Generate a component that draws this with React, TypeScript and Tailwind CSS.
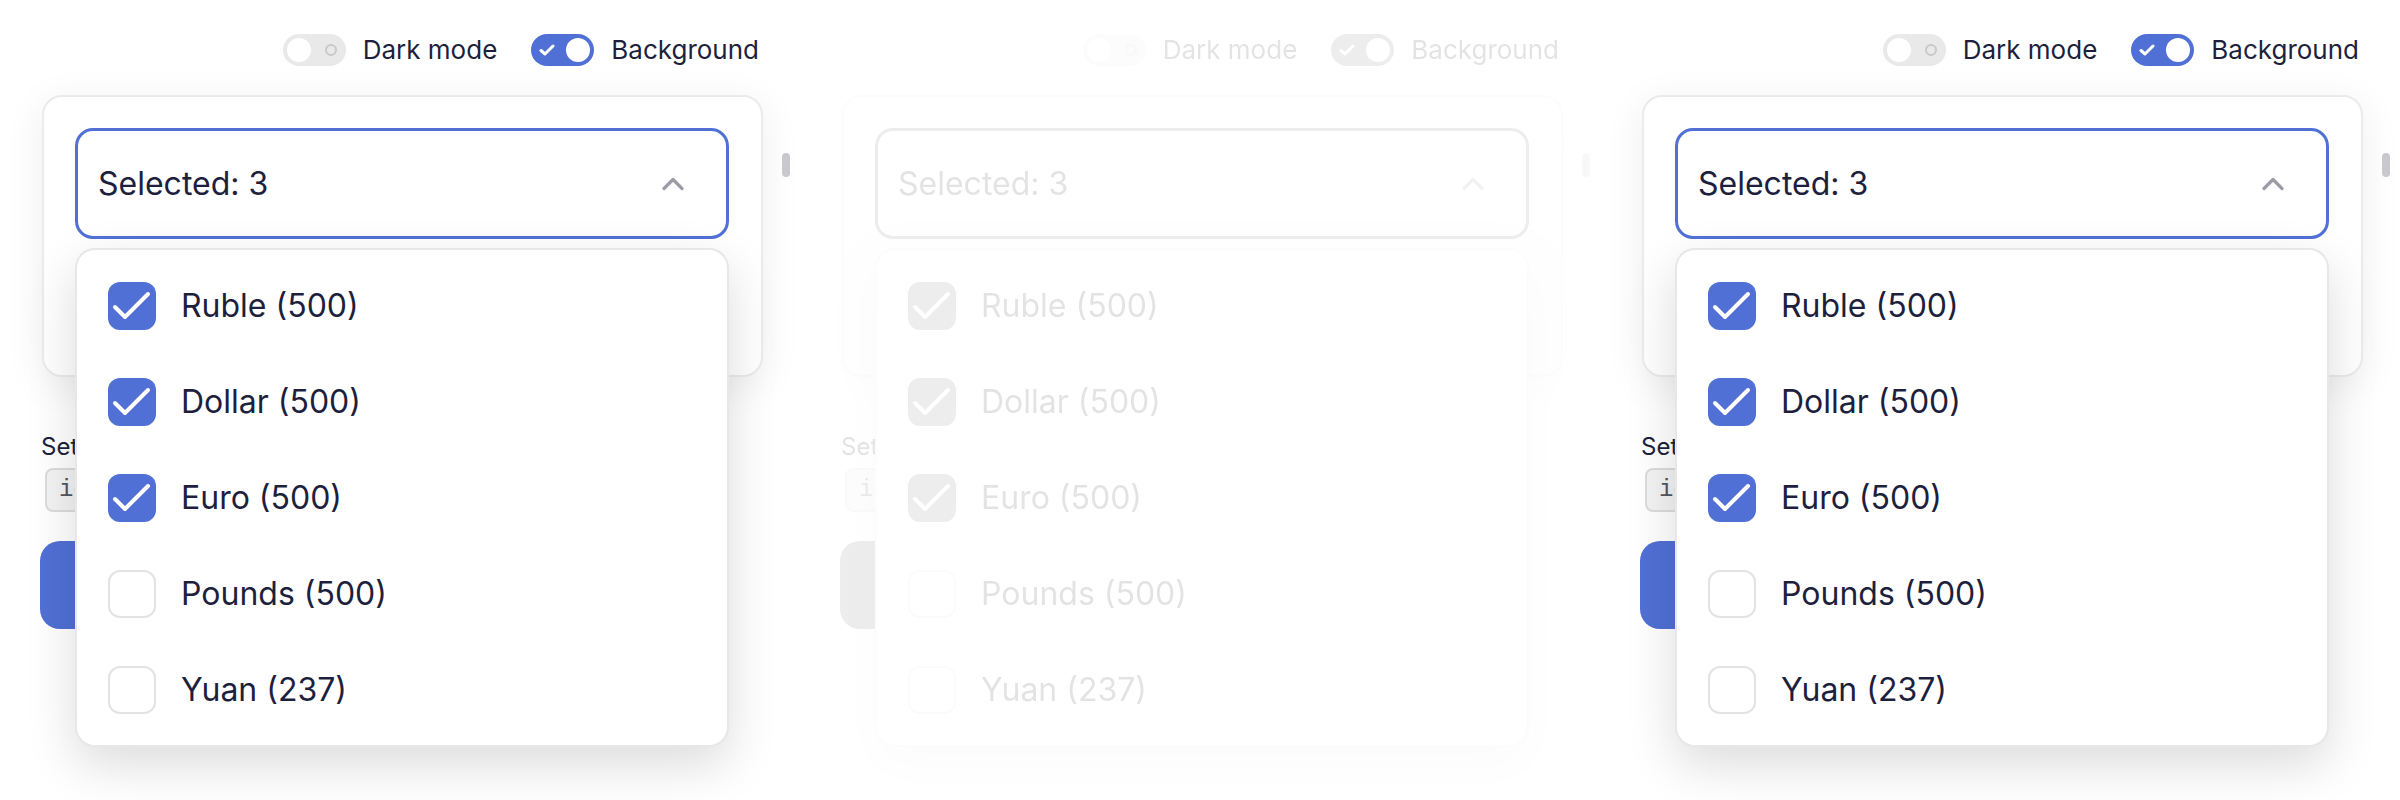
import clsx from "clsx"

const currencies = [
    { label: "Ruble (500)", checked: true },
    { label: "Dollar (500)", checked: true },
    { label: "Euro (500)", checked: true },
    { label: "Pounds (500)", checked: false },
    { label: "Yuan (237)", checked: false },
]

function Toggle({ on }: { on: boolean }) {
    if (on) {
        return (
            <div className="flex items-center justify-between w-[63px] h-[32px] rounded-full bg-[#5170d6] pl-[8px] pr-[4px]">
                <svg width="16" height="14" viewBox="0 0 16 14" fill="none">
                    <path d="M2 7.5 L6 11 L14 3" stroke="white" strokeWidth="3" strokeLinecap="round" strokeLinejoin="round" />
                </svg>
                <div className="w-[24px] h-[24px] rounded-full bg-white"></div>
            </div>
        )
    }
    return (
        <div className="flex items-center justify-between w-[63px] h-[32px] rounded-full bg-[#e9e9ea] pl-[4px] pr-[9px]">
            <div className="w-[24px] h-[24px] rounded-full bg-white"></div>
            <div className="w-[12px] h-[12px] rounded-full border-2 border-[#c9c9cc]"></div>
        </div>
    )
}

function Checkbox({ checked }: { checked: boolean }) {
    if (checked) {
        return (
            <div className="flex items-center justify-center w-[48px] h-[48px] rounded-[12px] bg-[#5170d6]">
                <svg width="48" height="48" viewBox="0 0 48 48" fill="none">
                    <path d="M7 25 L17 35 L40 12" stroke="white" strokeWidth="4" strokeLinecap="round" strokeLinejoin="round" />
                </svg>
            </div>
        )
    }
    return <div className="w-[48px] h-[48px] rounded-[12px] border-2 border-[#e3e3e5] bg-white"></div>
}

function Panel({ ghost }: { ghost?: boolean }) {
    return (
        <div className={clsx("relative w-[800px] h-[800px] shrink-0", ghost && "opacity-[0.12] grayscale")}>
            {/* toolbar */}
            <div className="flex items-center justify-end pt-[34px] pr-[41px] text-[26px] text-[#1d1f3d]">
                <Toggle on={false} />
                <span className="ml-[17px] leading-[32px]">Dark mode</span>
                <div className="ml-[34px]">
                    <Toggle on={true} />
                </div>
                <span className="ml-[17px] leading-[32px]">Background</span>
            </div>

            {/* demo card */}
            <div className="ml-[42px] mt-[29px] w-[721px] h-[282px] rounded-[20px] border-2 border-[#ebebec] bg-white pt-[31px] pl-[31px] shadow-[0_8px_40px_rgba(0,0,0,0.07)]">
                <div className="flex items-center justify-between w-[654px] h-[111px] rounded-[18px] border-[3px] border-[#5170d6] pl-[20px] pr-[41px]">
                    <span className="text-[32px] text-[#1d1f3d]">Selected: 3</span>
                    <svg width="24" height="15" viewBox="0 0 24 15" fill="none">
                        <path d="M3 12.5 L12 3.5 L21 12.5" stroke="#9c9ca8" strokeWidth="3.2" strokeLinecap="round" strokeLinejoin="round" />
                    </svg>
                </div>
            </div>

            {/* content under the card */}
            <div className="pl-[40px] mt-[54px]">
                <p className="text-[24px] leading-[32px] text-[#1d1f3d] pl-[1px]">Set selected value</p>
                <div className="mt-[5px] ml-[5px] inline-flex items-center h-[44px] px-[12px] rounded-[8px] border-2 border-[#dcdcdc] bg-[#f3f3f4] [font-family:'Liberation_Mono',monospace] text-[24px] text-[#55555f]">
                    id
                </div>
                <div className="mt-[29px] flex items-center justify-center w-[220px] h-[88px] rounded-[20px] bg-[#5170d6] text-white text-[24px]">
                    Set
                </div>
            </div>

            {/* scrollbar thumb */}
            <div className="absolute left-[782px] top-[153px] w-[8px] h-[24px] rounded-full bg-[#c8c8cd]"></div>

            {/* dropdown list */}
            <div className="absolute left-[75px] top-[248px] w-[654px] h-[499px] rounded-[20px] border-2 border-[#e7e7e9] bg-white py-[8px] shadow-[0_18px_50px_rgba(0,0,0,0.14)]">
                {currencies.map((c) => (
                    <div key={c.label} className="flex items-center h-[96px] pl-[31px]">
                        <Checkbox checked={c.checked} />
                        <span className="ml-[25px] text-[32px] text-[#1d1f3d]">{c.label}</span>
                    </div>
                ))}
            </div>
        </div>
    )
}

export default function App() {
    return (
        <div className="flex w-[2400px] h-[800px] overflow-hidden bg-white [font-family:Inter,'Liberation_Sans',sans-serif]">
            <Panel />
            <Panel ghost />
            <Panel />
        </div>
    )
}
